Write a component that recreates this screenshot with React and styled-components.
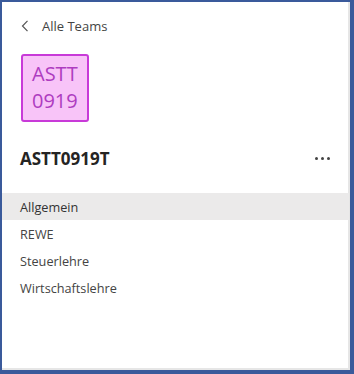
import React from "react";
import styled, { createGlobalStyle } from "styled-components";

const Global = createGlobalStyle`
  html, body { margin: 0; padding: 0; background: #fff; }
  body { font-family: "Open Sans", "Noto Sans", sans-serif; }
  * { box-sizing: border-box; }
`;

const Frame = styled.div`
  width: 354px;
  height: 374px;
  border: 2px solid #3a5a9b;
  border-right-width: 4px;
  border-bottom-width: 4px;
  background: #fff;
  box-shadow: inset -2px -2px 0 #e6e6e6;
  display: flex;
  flex-direction: column;
`;

const BackRow = styled.div`
  display: flex;
  align-items: center;
  gap: 13px;
  height: 20px;
  margin: 14px 0 0 19px;
  color: #444;
  font-size: 13px;
`;

const Avatar = styled.div`
  width: 68px;
  height: 68px;
  margin: 18px 0 0 19px;
  background: #f8c4f8;
  border: 2px solid #c83ad8;
  border-radius: 3px;
  color: #ae3cc0;
  font-size: 20px;
  line-height: 27px;
  padding: 4px 0 0 9px;
`;

const TitleRow = styled.div`
  display: flex;
  align-items: center;
  justify-content: space-between;
  margin: 23px 0 0 18px;
  padding-right: 20px;
  height: 26px;
`;

const Title = styled.div`
  font-size: 17px;
  font-weight: 700;
  color: #252423;
`;

const Dots = styled.div`
  display: flex;
  gap: 3px;
`;

const Dot = styled.span`
  width: 3px;
  height: 3px;
  border-radius: 50%;
  background: #444;
`;

const Channels = styled.div`
  margin-top: 22px;
  display: flex;
  flex-direction: column;
`;

const Channel = styled.div`
  height: 27px;
  display: flex;
  align-items: center;
  padding-left: 18px;
  font-size: 12.7px;
  color: ${(p) => (p.$active ? "#333" : "#444")};
  background: ${(p) => (p.$active ? "#ebeaea" : "transparent")};
  margin-right: 1px;
`;

export default function App() {
  return (
    <>
      <Global />
      <Frame>
        <BackRow>
          <svg width="8" height="12" viewBox="0 0 8 12">
            <path d="M6.5 0.8 L1.5 6 L6.5 11.2" fill="none" stroke="#555" strokeWidth="1.2" />
          </svg>
          <span>Alle Teams</span>
        </BackRow>
        <Avatar>
          ASTT
          <br />
          0919
        </Avatar>
        <TitleRow>
          <Title>ASTT0919T</Title>
          <Dots>
            <Dot />
            <Dot />
            <Dot />
          </Dots>
        </TitleRow>
        <Channels>
          {["Allgemein", "REWE", "Steuerlehre", "Wirtschaftslehre"].map((c, i) => (
            <Channel key={c} $active={i === 0}>
              {c}
            </Channel>
          ))}
        </Channels>
      </Frame>
    </>
  );
}
